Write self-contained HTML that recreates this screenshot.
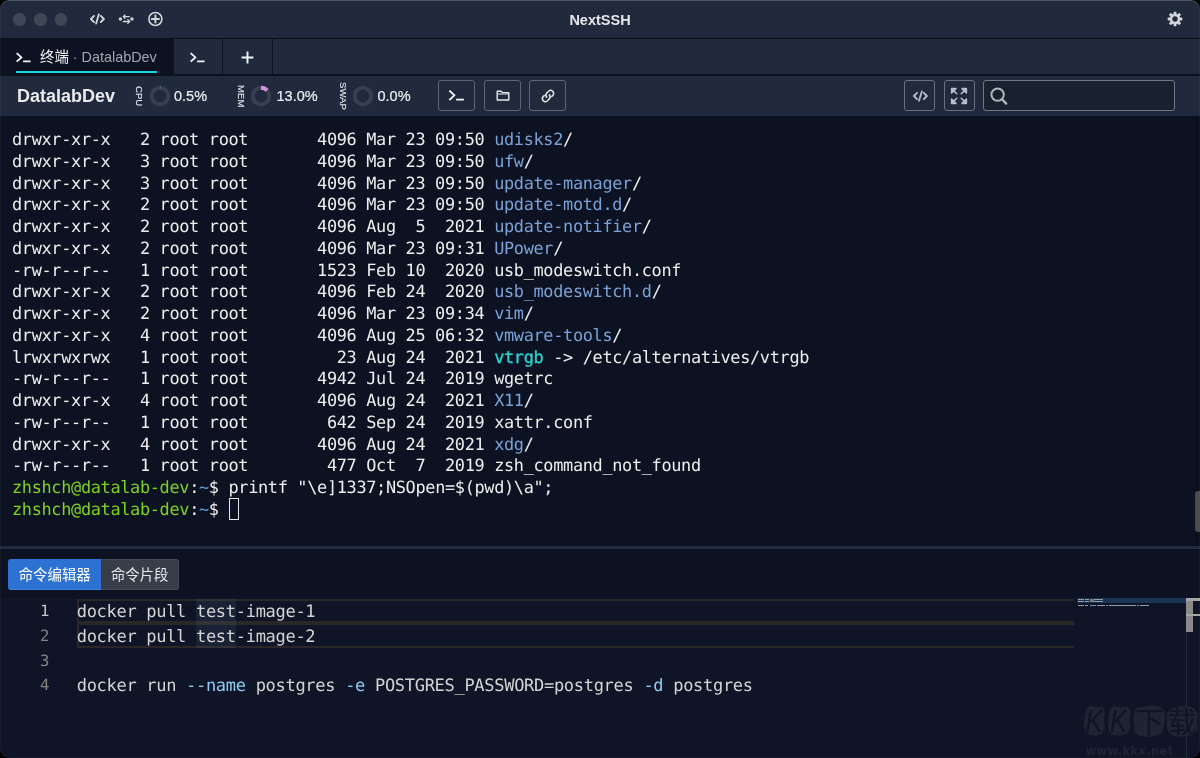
<!DOCTYPE html>
<html lang="zh-CN">
<head>
<meta charset="utf-8">
<title>NextSSH</title>
<style>
*{box-sizing:border-box;margin:0;padding:0}
html,body{width:1200px;height:758px;background:#000;overflow:hidden}
body{font-family:"Liberation Sans","Noto Sans CJK SC",sans-serif;color:#e5e7eb}
#win{will-change:transform;position:absolute;left:0;top:0;width:1200px;height:758px;background:#0c1221;border-radius:9.3px;overflow:hidden}
#win::after{content:"";position:absolute;left:0;top:0;width:1200px;height:758px;border-radius:9.3px;box-shadow:inset 0 1px 0 rgba(255,255,255,.19),inset 0 0 0 1px rgba(255,255,255,.035);pointer-events:none;z-index:50}
.abs{position:absolute}
/* title bar */
#title{position:absolute;left:0;top:0;width:1200px;height:38px;background:#202a3c}
.tl{position:absolute;top:13.1px;width:12.5px;height:12.5px;border-radius:50%;background:#3f4756}
#ttl{position:absolute;left:0;width:1200px;top:10.6px;text-align:center;font-weight:bold;font-size:14.5px;line-height:18px;color:#e5e7eb}
/* tab bar */
#tabs{position:absolute;left:0;top:38px;width:1200px;height:38px;background:#202a3c;border-top:1.5px solid #0b0f18;border-bottom:2px solid #0c111b}
.tab{position:absolute;top:0;height:35px;overflow:hidden}
/* toolbar */
#tool{position:absolute;left:0;top:76px;width:1200px;height:40px;background:#202a3c}
.btn{position:absolute;top:4px;height:31px;border:1px solid #5d6675;border-radius:3px}
.rot{position:absolute;font-size:9.6px;line-height:10px;-webkit-text-stroke:0.12px #e5e7eb;transform-origin:0 0;transform:rotate(90deg);white-space:nowrap;color:#e5e7eb}
.pct{position:absolute;top:11px;font-size:14.5px;line-height:18px;color:#eceef1;-webkit-text-stroke:0.2px #eceef1}
/* terminal */
#term{position:absolute;left:0;top:116px;width:1200px;height:430px;background:#0c1221}
pre{font-family:"DejaVu Sans Mono","Liberation Mono",monospace}
.r{position:absolute;left:12px;font-size:16.9px;letter-spacing:-0.329px;line-height:21.75px;height:21.75px;color:#eeeeee;white-space:pre;text-rendering:geometricPrecision}
.cur{position:absolute;left:216.8px;top:-0.9px;width:10.3px;height:21.8px;border:1px solid #e8e8e8}
.d{color:#7aa2d6}.c{color:#2bd2d2;-webkit-text-stroke:0.35px #2bd2d2}.g{color:#7ed321}.b{color:#5b9bd5}
/* bottom */
#split{position:absolute;left:0;top:546px;width:1200px;height:3px;background:#212b3d}
#bot{position:absolute;left:0;top:549px;width:1200px;height:209px;background:#0c1221}
.bt{position:absolute;top:10px;height:31px;font-size:14.4px;line-height:32.4px;text-align:center;white-space:nowrap}
#ed{position:absolute;left:0;top:49.4px;width:1200px;height:160px;background:#0f1526}
.ln{position:absolute;left:0;width:49.3px;text-align:right;color:#858585}
.el,.ln{font-family:"DejaVu Sans Mono","Liberation Mono",monospace;font-size:17.05px;letter-spacing:-0.3125px;line-height:24.6px;height:24.6px;white-space:pre;text-rendering:geometricPrecision}
.el{position:absolute;left:76.7px;color:#d4d4d4;z-index:3}
pre.ln{font-size:15.6px;letter-spacing:0;margin-top:-0.9px}
.k{color:#8ccdf5}
#mm i{position:absolute;display:block}
.box{position:absolute;left:76.8px;width:997.2px;height:24.5px;border:2px solid #292827;border-right:none}
</style>
</head>
<body>
<div id="win">
<div id="title">
<div class="tl" style="left:13.3px"></div><div class="tl" style="left:34px"></div><div class="tl" style="left:54.7px"></div>
<svg class="abs" style="left:89px;top:10.9px" width="17" height="16" viewBox="0 0 17 16" fill="none" stroke="#d3d6db" stroke-width="1.85" stroke-linecap="round" stroke-linejoin="round"><path d="M5 4.9 L1.9 8 L5 11.1"/><path d="M11.8 4.9 L14.9 8 L11.8 11.1"/><path d="M9.8 3.5 L7.1 12.5"/></svg>
<svg class="abs" style="left:118px;top:11.1px" width="17" height="16" viewBox="0 0 17 16" fill="none" stroke="#d3d6db" stroke-width="1.3" stroke-linecap="round" stroke-linejoin="round"><circle cx="2.4" cy="8" r="1.7" fill="#d3d6db" stroke="none"/><circle cx="13.9" cy="8" r="1.7" fill="#d3d6db" stroke="none"/><path d="M5.3 5.6 H11.3 M6.9 4 L5.3 5.6 L6.9 7.2"/><path d="M5.3 10.5 H11.6 M9.8 8.6 L11.7 10.5 L9.8 12.4"/></svg>
<svg class="abs" style="left:147px;top:10.2px" width="17" height="17" viewBox="0 0 17 17" fill="none" stroke="#d3d6db" stroke-width="1.6" stroke-linecap="round"><circle cx="8.4" cy="9" r="6.5"/><path d="M8.4 5.4 V12.6 M4.8 9 H12" stroke-width="2"/></svg>
<div id="ttl">NextSSH</div>
<svg class="abs" style="left:1167.2px;top:11.2px" width="16" height="16" viewBox="0 0 16 16"><g fill="#d3d6db"><circle cx="8" cy="8" r="5.2"/><rect x="6.55" y="0.7" width="2.9" height="14.6" rx="0.7"/><rect x="6.55" y="0.7" width="2.9" height="14.6" rx="0.7" transform="rotate(45 8 8)"/><rect x="6.55" y="0.7" width="2.9" height="14.6" rx="0.7" transform="rotate(90 8 8)"/><rect x="6.55" y="0.7" width="2.9" height="14.6" rx="0.7" transform="rotate(135 8 8)"/></g><circle cx="8" cy="8" r="2.7" fill="#202a3c"/></svg>
</div>
<div id="tabs">
<div class="tab" style="left:0;width:174px;background:#0c1222">
<svg class="abs" style="left:15px;top:11.6px" width="18" height="13" viewBox="0 0 18 13" fill="none" stroke="#f3f4f6" stroke-width="1.8" stroke-linecap="square" stroke-linejoin="miter"><path d="M2.3 2.7 L6.4 6.4 L2.3 10.1"/><path d="M9 10.3 H14.7"/></svg>
<div class="abs" style="left:40px;top:8px;font-size:14.4px;line-height:20px;color:#f3f4f6;white-space:nowrap">终端<span style="color:#a1a6af"> · DatalabDev</span></div>
<div class="abs" style="left:15.6px;top:31.5px;width:141.8px;height:2.2px;background:#12d6e0"></div>
</div>
<div class="tab" style="left:174px;width:48px">
<svg class="abs" style="left:15px;top:11.6px" width="18" height="13" viewBox="0 0 18 13" fill="none" stroke="#f3f4f6" stroke-width="1.8" stroke-linecap="square" stroke-linejoin="miter"><path d="M2.3 2.7 L6.4 6.4 L2.3 10.1"/><path d="M9 10.3 H14.7"/></svg>
</div>
<div class="abs" style="left:222px;top:0;width:1px;height:35px;background:#0e1320"></div>
<div class="tab" style="left:223px;width:49px">
<svg class="abs" style="left:18px;top:11.6px" width="13" height="13" viewBox="0 0 13 13" fill="none" stroke="#f3f4f6" stroke-width="1.9"><path d="M6.5 0.6 V12.4 M0.6 6.5 H12.4"/></svg>
</div>
<div class="abs" style="left:272px;top:0;width:1px;height:35px;background:#0e1320"></div>
</div>
<div id="tool">
<div class="abs" style="left:17px;top:9px;font-size:18px;line-height:22px;font-weight:bold;color:#e8eaed">DatalabDev</div>
<div class="rot" style="left:143.6px;top:9.6px">CPU</div>
<svg class="abs" style="left:148.5px;top:8.5px" width="22" height="22" viewBox="0 0 22 22"><circle cx="11" cy="11" r="8.3" fill="none" stroke="#374050" stroke-width="4"/><circle cx="11" cy="11" r="8.3" fill="none" stroke="#7aa2d6" stroke-width="4" stroke-dasharray="0.26 52.15" transform="rotate(-90 11 11)"/></svg>
<div class="pct" style="left:174px">0.5%</div>
<div class="rot" style="left:245.6px;top:8.6px">MEM</div>
<svg class="abs" style="left:250.2px;top:8.5px" width="22" height="22" viewBox="0 0 22 22"><circle cx="11" cy="11" r="8.3" fill="none" stroke="#374050" stroke-width="4"/><circle cx="11" cy="11" r="8.3" fill="none" stroke="#d48fe0" stroke-width="4" stroke-dasharray="6.78 52.15" transform="rotate(-90 11 11)"/></svg>
<div class="pct" style="left:276.5px">13.0%</div>
<div class="rot" style="left:347.6px;top:5.7px">SWAP</div>
<svg class="abs" style="left:352.3px;top:8.5px" width="22" height="22" viewBox="0 0 22 22"><circle cx="11" cy="11" r="8.3" fill="none" stroke="#374050" stroke-width="4"/></svg>
<div class="pct" style="left:377.5px">0.0%</div>
<div class="btn" style="left:438px;width:37px"><svg class="abs" style="left:9px;top:8px" width="18" height="13" viewBox="0 0 18 13" fill="none" stroke="#f3f4f6" stroke-width="1.8" stroke-linecap="square"><path d="M2 2.2 L6.4 6.3 L2 10.4"/><path d="M9 10.6 H15"/></svg></div>
<div class="btn" style="left:483.5px;width:37px"><svg class="abs" style="left:11px;top:8px" width="14" height="13" viewBox="0 0 14 13" fill="none" stroke="#e5e7eb" stroke-width="1.4" stroke-linejoin="round"><path d="M1.2 2.2 H5.2 L6.4 3.6 H12.8 V11 H1.2 Z"/><path d="M1.2 5 H12.8" stroke-width="1"/></svg></div>
<div class="btn" style="left:529px;width:37px"><svg class="abs" style="left:10px;top:7px" width="16" height="16" viewBox="0 0 16 16" fill="none" stroke="#e5e7eb" stroke-width="1.5" stroke-linecap="round"><path d="M6.8 9.2 a3 3 0 0 1 0 -4.2 l2 -2 a3 3 0 0 1 4.2 4.2 l-1.2 1.2"/><path d="M9.2 6.8 a3 3 0 0 1 0 4.2 l-2 2 a3 3 0 0 1 -4.2 -4.2 l1.2 -1.2"/></svg></div>
<div class="btn" style="left:904px;width:31.4px;border-color:#667080"><svg class="abs" style="left:6.6px;top:7px" width="17" height="16" viewBox="0 0 17 16" fill="none" stroke="#b7bec9" stroke-width="1.8" stroke-linecap="round" stroke-linejoin="round"><path d="M5 4.8 L1.9 8 L5 11.2"/><path d="M11.8 4.8 L14.9 8 L11.8 11.2"/><path d="M9.9 3.3 L7.0 12.8"/></svg></div>
<div class="btn" style="left:943.8px;width:31.2px;border-color:#667080"><svg class="abs" style="left:5.7px;top:6.1px" width="18" height="18" viewBox="0 0 18 18" fill="#b7bec9" stroke="#b7bec9" stroke-width="1.5" stroke-linecap="round" stroke-linejoin="round"><path d="M1.6 1.6 H6 L1.6 6 Z M3.6 3.6 L6.8 6.8"/><path d="M16.4 1.6 V6 L12 1.6 Z M14.4 3.6 L11.2 6.8"/><path d="M1.6 16.4 V12 L6 16.4 Z M3.6 14.4 L6.8 11.2"/><path d="M16.4 16.4 H12 L16.4 12 Z M14.4 14.4 L11.2 11.2"/></svg></div>
<div class="btn" style="left:983px;width:192px;background:#19212f;border-color:#6f7886"><svg class="abs" style="left:5px;top:5px" width="20" height="20" viewBox="0 0 20 20" fill="none" stroke="#aeb5c0" stroke-width="2" stroke-linecap="round"><circle cx="8.6" cy="8.6" r="6.2"/><path d="M13.2 13.4 L17.2 17.6" stroke-width="2.3"/></svg></div>
</div>
<div id="term">
<pre class="r" style="top:13.10px">drwxr-xr-x   2 root root       4096 Mar 23 09:50 <span class="d">udisks2</span>/</pre>
<pre class="r" style="top:34.85px">drwxr-xr-x   3 root root       4096 Mar 23 09:50 <span class="d">ufw</span>/</pre>
<pre class="r" style="top:56.60px">drwxr-xr-x   3 root root       4096 Mar 23 09:50 <span class="d">update-manager</span>/</pre>
<pre class="r" style="top:78.35px">drwxr-xr-x   2 root root       4096 Mar 23 09:50 <span class="d">update-motd.d</span>/</pre>
<pre class="r" style="top:100.10px">drwxr-xr-x   2 root root       4096 Aug  5  2021 <span class="d">update-notifier</span>/</pre>
<pre class="r" style="top:121.85px">drwxr-xr-x   2 root root       4096 Mar 23 09:31 <span class="d">UPower</span>/</pre>
<pre class="r" style="top:143.60px">-rw-r--r--   1 root root       1523 Feb 10  2020 usb_modeswitch.conf</pre>
<pre class="r" style="top:165.35px">drwxr-xr-x   2 root root       4096 Feb 24  2020 <span class="d">usb_modeswitch.d</span>/</pre>
<pre class="r" style="top:187.10px">drwxr-xr-x   2 root root       4096 Mar 23 09:34 <span class="d">vim</span>/</pre>
<pre class="r" style="top:208.85px">drwxr-xr-x   4 root root       4096 Aug 25 06:32 <span class="d">vmware-tools</span>/</pre>
<pre class="r" style="top:230.60px">lrwxrwxrwx   1 root root         23 Aug 24  2021 <span class="c">vtrgb</span> -&gt; /etc/alternatives/vtrgb</pre>
<pre class="r" style="top:252.35px">-rw-r--r--   1 root root       4942 Jul 24  2019 wgetrc</pre>
<pre class="r" style="top:274.10px">drwxr-xr-x   4 root root       4096 Aug 24  2021 <span class="d">X11</span>/</pre>
<pre class="r" style="top:295.85px">-rw-r--r--   1 root root        642 Sep 24  2019 xattr.conf</pre>
<pre class="r" style="top:317.60px">drwxr-xr-x   4 root root       4096 Aug 24  2021 <span class="d">xdg</span>/</pre>
<pre class="r" style="top:339.35px">-rw-r--r--   1 root root        477 Oct  7  2019 zsh_command_not_found</pre>
<pre class="r" style="top:361.10px"><span class="g">zhshch@datalab-dev</span>:<span class="b">~</span>$ printf &quot;\e]1337;NSOpen=$(pwd)\a&quot;;</pre>
<pre class="r" style="top:382.85px"><span class="g">zhshch@datalab-dev</span>:<span class="b">~</span>$ <span class="cur"></span></pre>
<div class="abs" style="left:1194.8px;top:0;width:5.2px;height:430px;background:#0a0f1b"></div>
<div class="abs" style="left:1194.8px;top:375px;width:7px;height:41.3px;background:#4b4b4b;border-radius:3px"></div>
</div>
<div id="split"></div>
<div id="bot">
<div class="bt" style="left:8px;width:93.4px;background:#2d72d3;border-bottom:1px solid #3b84e2;border-radius:3px 0 0 3px;color:#fff">命令编辑器</div>
<div class="bt" style="left:101.4px;width:77.7px;background:#383e49;border:1px solid #454b56;border-left:none;border-radius:0 3px 3px 0;color:#e5e7eb;line-height:31.4px">命令片段</div>
<div id="ed">
<div class="box" style="top:0.2px"></div>
<div class="box" style="top:24.7px"></div>
<div class="abs" style="left:195.8px;top:0.2px;width:39.8px;height:49px;background:rgba(120,150,190,.11);z-index:2"></div>
<pre class="ln" style="top:1.80px;color:#c6c6c6">1</pre>
<pre class="ln" style="top:26.45px">2</pre>
<pre class="ln" style="top:51.10px">3</pre>
<pre class="ln" style="top:75.75px">4</pre>
<pre class="el" style="top:1.80px">docker pull test-image-1</pre>
<pre class="el" style="top:26.45px">docker pull test-image-2</pre>
<pre class="el" style="top:75.75px">docker run <span class="k">--name</span> postgres <span class="k">-e</span> POSTGRES_PASSWORD=postgres <span class="k">-d</span> postgres</pre>
<div id="mm"><i style="left:1077.2px;top:-0.3px;width:108.8px;height:4.8px;background:#1c3453"></i><i style="left:1078.2px;top:0.7px;width:6.2px;height:1.3px;background:#969aa2"></i><i style="left:1085.4px;top:0.7px;width:4.1px;height:1.3px;background:#969aa2"></i><i style="left:1090.6px;top:0.7px;width:12.4px;height:1.3px;background:#969aa2"></i><i style="left:1078.2px;top:2.5px;width:6.2px;height:1.3px;background:#969aa2"></i><i style="left:1085.4px;top:2.5px;width:4.1px;height:1.3px;background:#969aa2"></i><i style="left:1090.6px;top:2.5px;width:12.4px;height:1.3px;background:#969aa2"></i><i style="left:1090.4px;top:0.5px;width:4.0px;height:1.7px;background:#77797d"></i><i style="left:1090.4px;top:2.3px;width:4.0px;height:1.7px;background:#77797d"></i><i style="left:1078.2px;top:6.7px;width:6.2px;height:1.3px;background:#969aa2"></i><i style="left:1085.4px;top:6.7px;width:3.1px;height:1.3px;background:#969aa2"></i><i style="left:1089.6px;top:6.7px;width:6.2px;height:1.3px;background:#5f9cc4"></i><i style="left:1096.8px;top:6.7px;width:8.3px;height:1.3px;background:#969aa2"></i><i style="left:1106.1px;top:6.7px;width:2.1px;height:1.3px;background:#5f9cc4"></i><i style="left:1109.2px;top:6.7px;width:26.9px;height:1.3px;background:#969aa2"></i><i style="left:1137.2px;top:6.7px;width:2.1px;height:1.3px;background:#5f9cc4"></i><i style="left:1140.3px;top:6.7px;width:8.3px;height:1.3px;background:#969aa2"></i><i style="left:1185.6px;top:0.0px;width:1.0px;height:160.0px;background:#232b3b"></i><i style="left:1186.2px;top:0.0px;width:6.6px;height:33.8px;background:#8a8a8a"></i><i style="left:1186.2px;top:0.0px;width:13.8px;height:2.4px;background:#a6a6a6"></i><i style="left:1186.2px;top:15.5px;width:13.8px;height:2.3px;background:#a6a6a6"></i></div>
<svg class="abs" style="left:1080px;top:102.6px" width="120" height="58" viewBox="1080 701 120 58">
<g fill="#1e2432"><path d="M1086 709 L1090 706 L1097 707.5 L1103 706.5 L1104.6 712 L1103.6 719 L1104.8 727 L1102 734 L1096 735.8 L1089 735 L1085 731 L1083.6 724 L1085 716 Z"/>
<path d="M1110 709 L1114 706 L1121 707.5 L1128 706.5 L1130.8 712 L1129.6 719 L1130.6 727 L1127 734 L1120 735.8 L1113 735 L1109 731 L1107.8 724 L1109 716 Z"/>
<path d="M1136 708 L1144 706.5 L1152 705.2 L1160 706.5 L1164.5 711 L1165 720 L1163.5 729 L1160 735 L1150 737.3 L1140 736 L1134.5 733 L1133.4 722 L1134 713 Z"/>
<path d="M1170 709 L1178 706.5 L1188 706.3 L1194 708 L1197.9 714 L1197 723 L1197.8 730 L1193 735.5 L1184 736.8 L1174 736 L1168 732 L1166.4 724 L1167 714 Z"/></g>
<g fill="#0f1526" font-family="'Liberation Sans','Noto Sans CJK SC',sans-serif" font-size="30">
<text x="1085.5" y="732" font-size="31" font-style="italic" textLength="17" lengthAdjust="spacingAndGlyphs">K</text>
<text x="1110" y="732" font-size="31" font-style="italic" textLength="17" lengthAdjust="spacingAndGlyphs">K</text>
<text x="1135" y="732.5" font-size="29">下</text>
<text x="1167.5" y="732.5" font-size="29">载</text></g>
<text x="1085.6" y="755.3" fill="#1e2535" font-family="'DejaVu Sans',sans-serif" font-weight="bold" font-size="11.6" textLength="87.5" lengthAdjust="spacing">www.kkx.net</text>
</svg>
</div>
</div>
</div>
</body>
</html>
